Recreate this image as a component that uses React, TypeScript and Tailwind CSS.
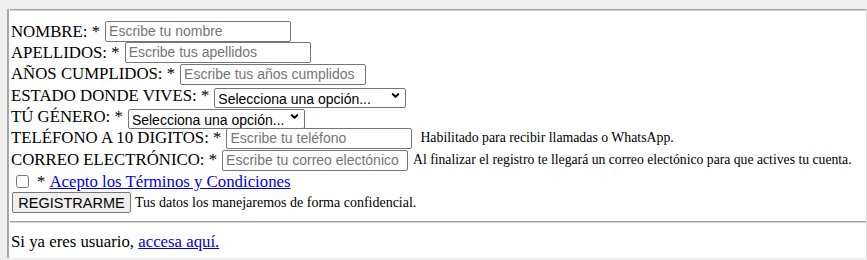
import React from 'react';
import { ChevronDown } from 'lucide-react';

const serif = "font-['Liberation_Serif','Times_New_Roman',serif]";
const sans = "font-['Liberation_Sans',Arial,sans-serif]";

const TextField = ({ placeholder }: { placeholder: string }) => (
  <input
    type="text"
    placeholder={placeholder}
    className={`${sans} ml-[5px] h-[21px] w-[186px] rounded-[2px] border border-[#767676] bg-white px-[3px] text-[14px] text-black placeholder:text-[#757575] outline-none`}
  />
);

const SelectField = ({ width }: { width: string }) => (
  <div className={`relative ml-[5px] h-[20px] ${width}`}>
    <select
      defaultValue=""
      className={`${sans} h-full w-full appearance-none rounded-[2px] border border-[#767676] bg-white pl-[3px] pr-[18px] text-[14px] text-black outline-none`}
    >
      <option value="">Selecciona una opción...</option>
    </select>
    <ChevronDown
      className="pointer-events-none absolute right-[5px] top-[4px] h-[11px] w-[11px] text-black"
      strokeWidth={4.5}
    />
  </div>
);

const Row = ({ h, children }: { h: string; children: React.ReactNode }) => (
  <div className={`flex items-center whitespace-nowrap ${h}`}>{children}</div>
);

export default function App() {
  return (
    <div className="h-[260px] w-[867px] overflow-hidden bg-[#efefef] pl-[7px] pt-[3px]">
      <div
        className={`${serif} h-[249px] border-l-2 border-r border-l-[#a8a8a8] border-r-[#dcdcdc] bg-white text-[16.8px] text-black`}
      >
        <div className="ml-[1px] mt-[6px] h-[2px] border-t border-b border-t-[#a0a0a0] border-b-[#d4d4d4]" />

        <div className="mt-[10px] pl-[2px]">
          <Row h="h-[21px]">
            <span>NOMBRE: *</span>
            <TextField placeholder="Escribe tu nombre" />
          </Row>
          <Row h="h-[21px]">
            <span>APELLIDOS: *</span>
            <TextField placeholder="Escribe tus apellidos" />
          </Row>
          <Row h="h-[22px]">
            <span>AÑOS CUMPLIDOS: *</span>
            <TextField placeholder="Escribe tus años cumplidos" />
          </Row>
          <Row h="h-[21px]">
            <span>ESTADO DONDE VIVES: *</span>
            <SelectField width="w-[192px]" />
          </Row>
          <Row h="h-[21px]">
            <span>TÚ GÉNERO: *</span>
            <SelectField width="w-[177px]" />
          </Row>
          <Row h="h-[22px]">
            <span>TELÉFONO A 10 DIGITOS: *</span>
            <TextField placeholder="Escribe tu teléfono" />
            <span className="ml-[8px] text-[13.8px]">Habilitado para recibir llamadas o WhatsApp.</span>
          </Row>
          <Row h="h-[22px]">
            <span>CORREO ELECTRÓNICO: *</span>
            <TextField placeholder="Escribe tu correo electónico" />
            <span className="ml-[5px] text-[13.7px]">
              Al finalizar el registro te llegará un correo electónico para que actives tu cuenta.
            </span>
          </Row>
          <Row h="h-[21px]">
            <input type="checkbox" className="ml-[5px] h-[13px] w-[13px]" />
            <span className="ml-[8px]">*</span>
            <a href="#" className="ml-[4px] text-[#0000ee] underline">
              Acepto los Términos y Condiciones
            </a>
          </Row>
          <Row h="h-[21px]">
            <button
              type="button"
              className={`${sans} ml-[1px] h-[21px] w-[119px] rounded-[2px] border border-[#767676] bg-[#efefef] text-[14.5px] text-black`}
            >
              REGISTRARME
            </button>
            <span className="ml-[4px] text-[14px]">Tus datos los manejaremos de forma confidencial.</span>
          </Row>
        </div>

        <div className="ml-[1px] mt-[8px] h-[2px] border-t border-b border-t-[#a0a0a0] border-b-[#d4d4d4]" />

        <div className="mt-[6px] pl-[2px]">
          Si ya eres usuario,{' '}
          <a href="#" className="text-[#0000ee] underline">
            accesa aquí.
          </a>
        </div>
      </div>
    </div>
  );
}
